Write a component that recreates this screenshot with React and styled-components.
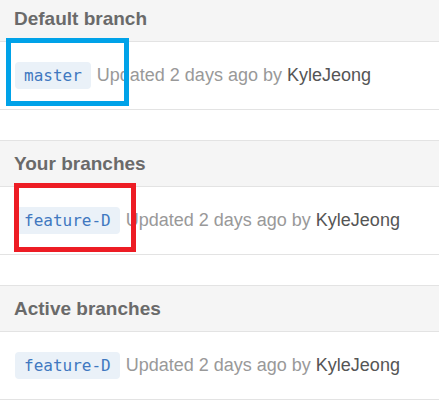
import React from "react";
import styled, { createGlobalStyle } from "styled-components";

const GlobalStyle = createGlobalStyle`
  body {
    margin: 0;
    background: #ffffff;
    font-family: "Liberation Sans", Arial, sans-serif;
  }
`;

const sections = [
  { title: "Default branch", branch: "master", mark: "blue" },
  { title: "Your branches", branch: "feature-D", mark: "red" },
  { title: "Active branches", branch: "feature-D" },
];

const App = () => (
  <>
    <GlobalStyle />
    <Page>
      {sections.map((section) => (
        <Section key={section.title}>
          <Header>{section.title}</Header>
          <Row>
            <BranchWrap>
              <Branch>{section.branch}</Branch>
              {section.mark && <Mark $color={section.mark} />}
            </BranchWrap>
            <Meta>
              Updated 2 days ago by <Author>KyleJeong</Author>
            </Meta>
          </Row>
        </Section>
      ))}
    </Page>
  </>
);

const Page = styled.div`
  margin-top: -5px;
  display: flex;
  flex-direction: column;
  gap: 30px;
`;

const Section = styled.div`
  border-top: 1px solid #e3e3e3;
`;

const Header = styled.h3`
  margin: 0;
  height: 45px;
  padding: 0 14px;
  display: flex;
  align-items: center;
  background: #f5f5f5;
  border-bottom: 1px solid #e3e3e3;
  color: #6a6a6a;
  font-size: 19px;
  font-weight: bold;
`;

const Row = styled.div`
  height: 67px;
  padding: 0 15px;
  display: flex;
  align-items: center;
  gap: 6px;
  border-bottom: 1px solid #e3e3e3;
`;

const BranchWrap = styled.div`
  position: relative;
  display: flex;
`;

const Branch = styled.span`
  height: 27px;
  padding: 0 9px;
  display: flex;
  align-items: center;
  background: #eaf1f8;
  border-radius: 4px;
  color: #4078c0;
  font-family: "DejaVu Sans Mono", "Liberation Mono", monospace;
  font-size: 16px;
`;

const Mark = styled.div`
  position: absolute;
  box-sizing: border-box;
  border: 5px solid ${(p) => (p.$color === "blue" ? "#00a2e8" : "#ed1c24")};
  left: ${(p) => (p.$color === "blue" ? "-9px" : "-1px")};
  top: ${(p) => (p.$color === "blue" ? "-24px" : "-24px")};
  width: ${(p) => (p.$color === "blue" ? "123px" : "122px")};
  height: ${(p) => (p.$color === "blue" ? "68px" : "69px")};
`;

const Meta = styled.span`
  color: #999999;
  font-size: 18px;
  white-space: nowrap;
`;

const Author = styled.span`
  color: #555555;
`;

export default App;
